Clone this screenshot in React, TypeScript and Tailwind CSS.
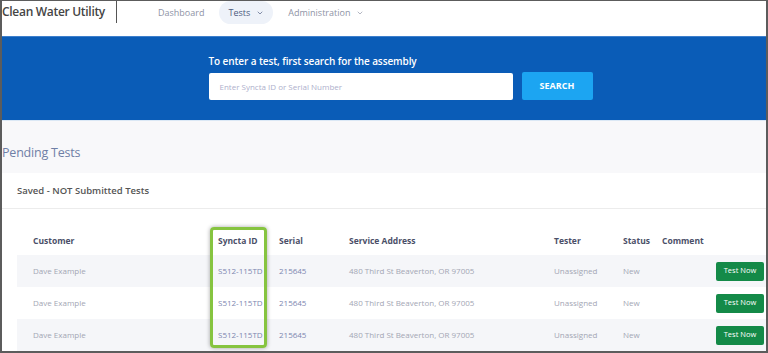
import { ChevronDown } from "lucide-react";

const rows = [
  { customer: "Dave Example", id: "S512-115TD", serial: "215645", address: "480 Third St Beaverton, OR 97005", tester: "Unassigned", status: "New" },
  { customer: "Dave Example", id: "S512-115TD", serial: "215645", address: "480 Third St Beaverton, OR 97005", tester: "Unassigned", status: "New" },
  { customer: "Dave Example", id: "S512-115TD", serial: "215645", address: "480 Third St Beaverton, OR 97005", tester: "Unassigned", status: "New" },
];

const cols = "grid grid-cols-[193px_61px_70px_205px_69px_39px_54px_1fr] items-center";

export default function App() {
  return (
    <div
      className="w-[768px] h-[353px] overflow-hidden bg-white border-l-2 border-r-2 border-t border-b-2 border-[#5c5c5c] flex flex-col"
      style={{ fontFamily: '"Open Sans", "Noto Sans", sans-serif' }}
    >
      {/* top nav */}
      <header className="h-[35px] shrink-0 flex items-start">
        <div className="h-[22px] w-[115px] border-r border-[#555] flex items-center">
          <span className="text-[12px] font-semibold text-[#454545] tracking-[-0.3px]">Clean Water Utility</span>
        </div>
        <nav className="flex items-center h-[23px] ml-[41px] text-[9px]">
          <span className="text-[#8e93a5]">Dashboard</span>
          <span className="ml-[15px] flex items-center gap-[6px] h-[23px] px-[9px] rounded-full bg-[#eef2f9] text-[#4d5b80]">
            Tests <ChevronDown size={8} strokeWidth={2} />
          </span>
          <span className="ml-[15px] flex items-center gap-[6px] text-[#8e93a5]">
            Administration <ChevronDown size={8} strokeWidth={2} />
          </span>
        </nav>
      </header>

      {/* search banner */}
      <section className="h-[84px] shrink-0 bg-[#0a5cb7] border-t border-[#3d7fcc] flex justify-center pl-[34px]">
        <div className="pt-[17px] w-[385px]">
          <div className="text-[10px] font-semibold text-white leading-[14px] tracking-[-0.1px]">
            To enter a test, first search for the assembly
          </div>
          <div className="flex mt-[5px]">
            <div className="w-[304px] h-[27px] bg-white rounded-[2px] flex items-center pl-[11px] text-[8px] text-[#aeb0cc]">
              Enter Syncta ID or Serial Number
            </div>
            <div className="ml-[9px] w-[71px] h-[28px] -mt-[1px] bg-[#1ca5f2] rounded-[2px] flex items-center justify-center text-[9px] font-bold text-white">
              SEARCH
            </div>
          </div>
        </div>
      </section>

      {/* pending tests */}
      <div className="h-[53px] shrink-0 bg-[#f8f8fa] border-t border-[#dbe8f5] flex items-end pb-[10px]">
        <h2 className="text-[12.5px] text-[#6f7fa6] tracking-[-0.2px]">Pending Tests</h2>
      </div>

      <div className="flex-1 bg-white">
        <div className="h-[36px] border-b border-[#ececec] flex items-center pl-[15px] pt-[2px]">
          <span className="text-[9.5px] font-semibold text-[#555]">Saved - NOT Submitted Tests</span>
        </div>

        <div className="relative pl-[15px] pt-[18px]">
          <div className={`${cols} h-[28px] text-[8.5px] font-bold text-[#4b4f68]`}>
            <span className="pl-[16px]">Customer</span>
            <span className="pl-[8px]">Syncta ID</span>
            <span className="pl-[8px]">Serial</span>
            <span className="pl-[8px]">Service Address</span>
            <span className="pl-[8px]">Tester</span>
            <span className="pl-[8px]">Status</span>
            <span className="pl-[8px]">Comment</span>
            <span />
          </div>
          {rows.map((r, i) => (
            <div
              key={i}
              className={`${cols} h-[32px] text-[8px] text-[#a3a6b4] ${i % 2 === 0 ? "bg-[#f5f6f9]" : "bg-white"}`}
            >
              <span className="pl-[16px]">{r.customer}</span>
              <span className="pl-[8px] text-[#7c86b0]">{r.id}</span>
              <span className="pl-[8px] text-[#7c86b0]">{r.serial}</span>
              <span className="pl-[8px]">{r.address}</span>
              <span className="pl-[8px]">{r.tester}</span>
              <span className="pl-[8px]">{r.status}</span>
              <span />
              <span className="pl-[8px]">
                <span className="inline-flex items-center justify-center w-[48px] h-[19px] rounded-[2px] bg-[#148a48] text-white text-[7.5px]">
                  Test Now
                </span>
              </span>
            </div>
          ))}
          {/* highlight on the Syncta ID column */}
          <div className="absolute left-[208px] top-[18px] w-[57px] h-[121px] border-[3px] border-[#86c440] rounded-[4px] shadow-[0_0_4px_rgba(0,0,0,0.35)] pointer-events-none" />
        </div>
      </div>
    </div>
  );
}
